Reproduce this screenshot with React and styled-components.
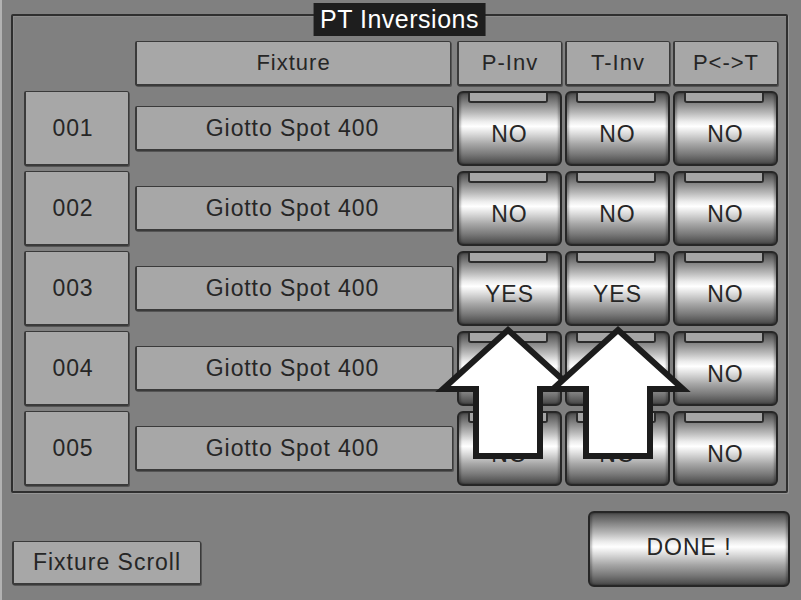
import React from "react";
import styled, { createGlobalStyle } from "styled-components";

const rows = [
  { id: "001", name: "Giotto Spot 400", p: "NO", t: "NO", s: "NO" },
  { id: "002", name: "Giotto Spot 400", p: "NO", t: "NO", s: "NO" },
  { id: "003", name: "Giotto Spot 400", p: "YES", t: "YES", s: "NO" },
  { id: "004", name: "Giotto Spot 400", p: "NO", t: "NO", s: "NO" },
  { id: "005", name: "Giotto Spot 400", p: "NO", t: "NO", s: "NO" },
];

const App = () => {
  return (
    <React.Fragment>
      <GlobalStyle />
      <Screen>
        <Panel>
          <Title>PT Inversions</Title>
          <HeaderRow>
            <Spacer />
            <HeaderCell width="316px">Fixture</HeaderCell>
            <Toggles>
              <HeaderCell width="105px">P-Inv</HeaderCell>
              <HeaderCell width="105px">T-Inv</HeaderCell>
              <HeaderCell width="105px">P&lt;-&gt;T</HeaderCell>
            </Toggles>
          </HeaderRow>
          <Rows>
            {rows.map((r) => (
              <Row key={r.id}>
                <NumCell>{r.id}</NumCell>
                <NameCell>{r.name}</NameCell>
                <Toggles>
                  <Toggle>
                    <Tab />
                    <ToggleLabel>{r.p}</ToggleLabel>
                  </Toggle>
                  <Toggle>
                    <Tab />
                    <ToggleLabel>{r.t}</ToggleLabel>
                  </Toggle>
                  <Toggle>
                    <Tab />
                    <ToggleLabel>{r.s}</ToggleLabel>
                  </Toggle>
                </Toggles>
              </Row>
            ))}
          </Rows>
        </Panel>
        <Footer>
          <ScrollButton>Fixture Scroll</ScrollButton>
          <DoneButton>DONE !</DoneButton>
        </Footer>
        <Arrows width="801" height="600" viewBox="0 0 801 600">
          <path
            d="M508 330 L573 389 L540 389 L540 456 L476 456 L476 389 L443 389 Z"
            fill="#fff"
            stroke="#1c1c1c"
            strokeWidth="6"
            strokeLinejoin="miter"
          />
          <path
            d="M618 330 L683 389 L650 389 L650 456 L586 456 L586 389 L553 389 Z"
            fill="#fff"
            stroke="#1c1c1c"
            strokeWidth="6"
            strokeLinejoin="miter"
          />
        </Arrows>
      </Screen>
    </React.Fragment>
  );
};

const GlobalStyle = createGlobalStyle`
  body {
    margin: 0;
    background: #808080;
    font-family: "Liberation Sans", Arial, sans-serif;
  }
`;

const Screen = styled.div`
  position: relative;
  width: 801px;
  height: 600px;
  box-sizing: border-box;
  padding-top: 14px;
  background: #808080;
  box-shadow: inset 2px 0 0 #b2b2b2;
  overflow: hidden;
`;

const Panel = styled.div`
  position: relative;
  box-sizing: border-box;
  width: 777px;
  height: 479px;
  margin-left: 11px;
  padding: 25px 0 0 11px;
  border: 2px solid #2f2f2f;
  border-radius: 2px;
  box-shadow: inset 1px 1px 0 #8c8c8c, 1px 1px 0 #959595;
`;

const Title = styled.div`
  position: absolute;
  top: -13px;
  left: 50%;
  transform: translateX(-50%);
  height: 33px;
  padding: 0 7px;
  display: flex;
  align-items: center;
  background: #1e1e1e;
  color: #fff;
  font-size: 25px;
  letter-spacing: 0.5px;
  white-space: nowrap;
`;

const HeaderRow = styled.div`
  display: flex;
  height: 45px;
  margin-bottom: 5px;
`;

const Spacer = styled.div`
  width: 111px;
  flex: none;
`;

const Toggles = styled.div`
  display: flex;
  gap: 3px;
  margin-left: 6px;
`;

const Cell = styled.div`
  box-sizing: border-box;
  flex: none;
  display: flex;
  align-items: center;
  justify-content: center;
  background: #a7a7a7;
  color: #262626;
  font-size: 23px;
  letter-spacing: 0.9px;
  border: 1px solid #3a3a3a;
  border-left-width: 2px;
  border-bottom-width: 2px;
  border-radius: 2px;
  box-shadow: 1px 1px 0 #555;
`;

const HeaderCell = styled(Cell)`
  width: ${(p) => p.width};
  height: 45px;
  font-size: 22px;
  letter-spacing: 1px;
`;

const Rows = styled.div`
  display: flex;
  flex-direction: column;
  gap: 5px;
`;

const Row = styled.div`
  display: flex;
  align-items: center;
  height: 75px;
`;

const NumCell = styled(Cell)`
  width: 105px;
  height: 75px;
  margin-right: 6px;
  padding-right: 8px;
`;

const NameCell = styled(Cell)`
  width: 318px;
  height: 45px;
  margin-right: -2px;
  padding-right: 4px;
`;

const chrome = `
  background: linear-gradient(
    to bottom,
    #4e4e4e 0%,
    #7c7c7c 12%,
    #b9b9b9 28%,
    #ececec 40%,
    #ffffff 47%,
    #d9d9d9 58%,
    #a6a6a6 72%,
    #7a7a7a 86%,
    #474747 100%
  );
  border: 2px solid #262626;
  border-radius: 6px;
  box-shadow: inset 2px 0 2px rgba(0, 0, 0, 0.25), inset -2px 0 2px rgba(0, 0, 0, 0.25);
`;

const Toggle = styled.div`
  ${chrome}
  box-sizing: border-box;
  width: 105px;
  height: 75px;
  display: flex;
  flex-direction: column;
`;

const Tab = styled.div`
  height: 8px;
  margin: 0 12px 0 9px;
  background: #a5a5a5;
  border: 2px solid #2c2c2c;
  border-top: none;
  border-radius: 0 0 3px 3px;
`;

const ToggleLabel = styled.div`
  flex: 1;
  display: flex;
  align-items: center;
  justify-content: center;
  padding-top: 2px;
  color: #262626;
  font-size: 23px;
  letter-spacing: 1px;
`;

const Footer = styled.div`
  display: flex;
  justify-content: space-between;
  align-items: flex-start;
  padding: 0 11px 0 12px;
`;

const ScrollButton = styled(Cell)`
  width: 189px;
  height: 44px;
  margin-top: 48px;
  font-size: 23px;
  letter-spacing: 1px;
`;

const DoneButton = styled.div`
  ${chrome}
  box-sizing: border-box;
  width: 202px;
  height: 76px;
  margin-top: 18px;
  display: flex;
  align-items: center;
  justify-content: center;
  padding-bottom: 4px;
  color: #262626;
  font-size: 23px;
  letter-spacing: 1px;
`;

const Arrows = styled.svg`
  position: absolute;
  left: 0;
  top: 0;
  pointer-events: none;
`;

export default App;
